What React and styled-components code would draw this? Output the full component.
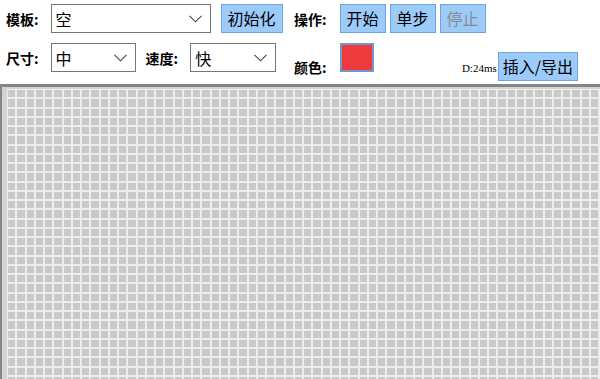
import React from "react";
import styled, { createGlobalStyle } from "styled-components";

const Global = createGlobalStyle`
  html, body { margin: 0; padding: 0; background: #fff; }
  body { width: 600px; height: 379px; overflow: hidden; font-family: "Noto Sans CJK SC", "Noto Sans", sans-serif; color: #000; }
`;

const Page = styled.div`
  display: flex;
  flex-direction: column;
  height: 379px;
`;

const Toolbar = styled.div`
  display: grid;
  grid-template-columns: 288px 284px;
  grid-template-rows: 29px 39px;
  row-gap: 10px;
  padding: 4px 0 0 6px;
  height: 84px;
  flex: none;
  box-sizing: border-box;
`;

const Group = styled.div`
  display: flex;
  align-items: ${(p) => p.$align || "center"};
  justify-content: ${(p) => p.$justify || "flex-start"};
`;

const Label = styled.span`
  font-size: 14px;
  font-weight: 700;
  line-height: 18px;
  margin-right: ${(p) => p.$gap || 12}px;
  margin-left: ${(p) => p.$ml || 0}px;
  margin-top: ${(p) => p.$mt || 0}px;
  white-space: nowrap;
`;

const SelectWrap = styled.div`
  position: relative;
  width: ${(p) => p.$w}px;
  height: 29px;
  box-sizing: border-box;
`;

const Select = styled.select`
  appearance: none;
  -webkit-appearance: none;
  width: 100%;
  height: 100%;
  box-sizing: border-box;
  border: 1px solid #767676;
  border-radius: 0;
  background: #fff;
  font-family: "Noto Sans CJK SC", sans-serif;
  font-size: 16px;
  padding: 0 0 0 4px;
  color: #000;
  outline: none;
`;

const Chevron = styled.svg`
  position: absolute;
  right: 9px;
  top: 11px;
  pointer-events: none;
`;

const Button = styled.button`
  height: 29px;
  box-sizing: border-box;
  padding: 0 ${(p) => p.$px || 6}px;
  margin: ${(p) => p.$m || "0"};
  border: 1px solid #6ea3de;
  background: #9ccbfa;
  font-family: "Noto Sans CJK SC", sans-serif;
  font-size: 16px;
  line-height: 27px;
  color: ${(p) => (p.$disabled ? "#8a8a8a" : "#000")};
  border-radius: 0;
  cursor: pointer;
`;

const Swatch = styled.div`
  width: 34px;
  height: 29px;
  box-sizing: border-box;
  background: #ee3b3e;
  border: 2px solid #7197cc;
`;

const Status = styled.span`
  font-family: "Liberation Serif", serif;
  font-size: 11px;
  line-height: 12px;
  margin: 0 1px 7px 0;
`;

const Board = styled.div`
  flex: 1;
  overflow: hidden;
  border-top: 3px solid #858585;
  border-left: 2px solid #858585;
  background: #d3d3d3;
  padding: 2px 0 0 5px;
`;

const Grid = styled.div`
  display: grid;
  grid-template-columns: repeat(${(p) => p.$cols}, 7.25px);
  grid-auto-rows: 7.25px;
  gap: 2px;
  padding: 1px;
  background: #ededed;
  width: max-content;
`;

const Cell = styled.div`
  background: ${(p) => (p.$on ? "#ee3b3e" : "#c9c9c9")};
`;

const Dropdown = ({ w, value, options }) => (
  <SelectWrap $w={w}>
    <Select defaultValue={value}>
      {options.map((o) => (
        <option key={o}>{o}</option>
      ))}
    </Select>
    <Chevron width="13" height="8" viewBox="0 0 13 8">
      <path d="M0.5 0.8 L6.5 6.8 L12.5 0.8" fill="none" stroke="#444" strokeWidth="1.1" />
    </Chevron>
  </SelectWrap>
);

const COLS = 66;
const ROWS = 33;

export default function App() {
  const cells = [];
  for (let i = 0; i < COLS * ROWS; i++) cells.push(<Cell key={i} />);
  return (
    <Page>
      <Global />
      <Toolbar>
        <Group>
          <Label>模板:</Label>
          <Dropdown w={160} value="空" options={["空", "滑翔机", "脉冲星"]} />
          <Button $m="0 0 0 10px">初始化</Button>
        </Group>
        <Group>
          <Label $gap={13}>操作:</Label>
          <Button>开始</Button>
          <Button $m="0 0 0 4px">单步</Button>
          <Button $m="0 0 0 4px" $disabled>停止</Button>
        </Group>
        <Group $align="flex-start">
          <Label $mt={6}>尺寸:</Label>
          <Dropdown w={85} value="中" options={["小", "中", "大"]} />
          <Label $ml={10} $mt={6}>速度:</Label>
          <Dropdown w={86} value="快" options={["慢", "中", "快"]} />
        </Group>
        <Group $align="flex-start" $justify="space-between">
          <Group $align="flex-start">
            <Label $gap={13} $mt={15}>颜色:</Label>
            <Swatch />
          </Group>
          <Group $align="flex-end" style={{ marginTop: 9 }}>
            <Status>D:24ms</Status>
            <Button $px={4}>插入/导出</Button>
          </Group>
        </Group>
      </Toolbar>
      <Board>
        <Grid $cols={COLS}>{cells}</Grid>
      </Board>
    </Page>
  );
}
